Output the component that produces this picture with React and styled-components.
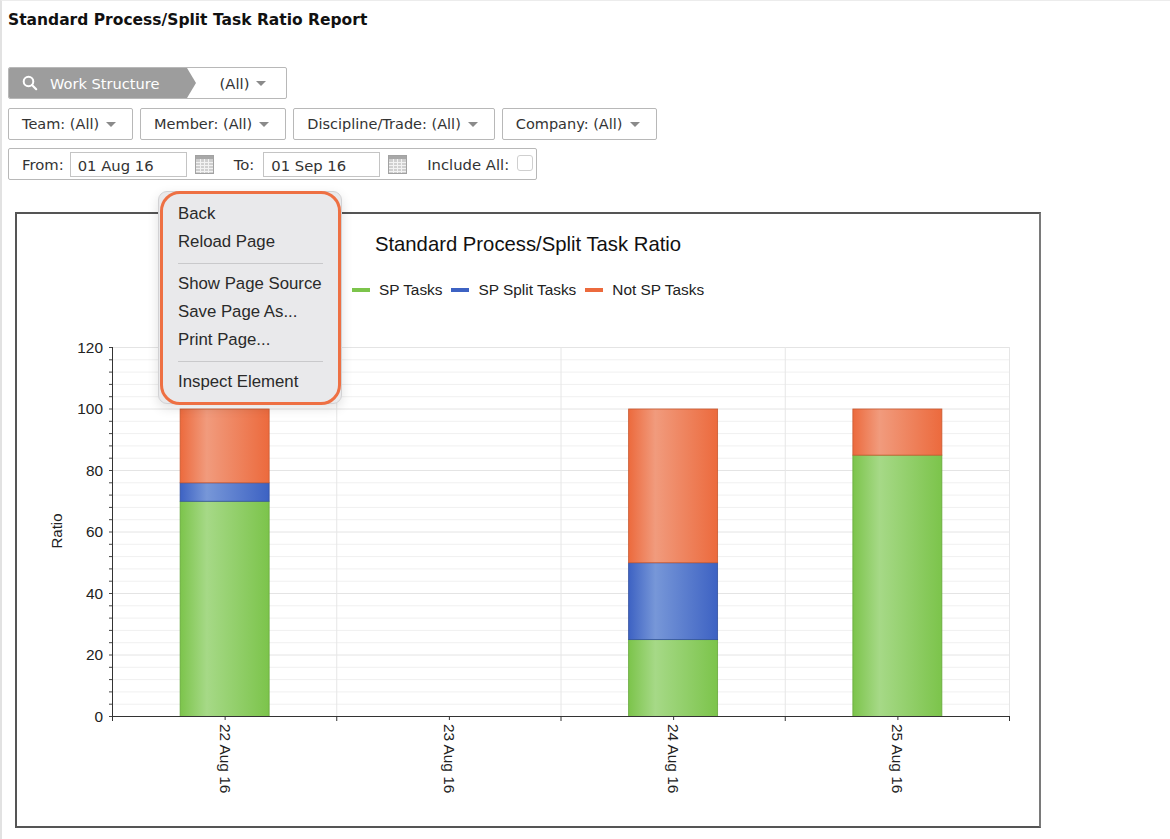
import React from "react";
import styled, { createGlobalStyle } from "styled-components";

const GlobalStyle = createGlobalStyle`
  html, body { margin: 0; padding: 0; background: #fff; }
  body { font-family: "DejaVu Sans", Verdana, sans-serif; color: #333; }
`;

const Page = styled.div`
  min-height: 839px;
  border-left: 2px solid #e2e2e2;
  border-top: 1px solid #ececec;
  padding: 0 0 0 6px;
  position: relative;
  box-sizing: border-box;
`;

const Heading = styled.h1`
  margin: 0;
  padding-top: 10px;
  font-size: 15.5px;
  line-height: 19px;
  font-weight: bold;
  color: #111;
`;

const WorkBar = styled.div`
  margin-top: 37px;
  display: flex;
  width: 279px;
  height: 32px;
  box-sizing: border-box;
  border: 1px solid #b8b8b8;
  border-radius: 2px;
  overflow: hidden;
`;

const WorkLabel = styled.div`
  width: 187px;
  display: flex;
  align-items: center;
  gap: 12px;
  padding-left: 13px;
  box-sizing: border-box;
  background: #9d9d9d;
  color: #fff;
  font-size: 14.6px;
  white-space: nowrap;
  clip-path: polygon(0 0, calc(100% - 9px) 0, 100% 50%, calc(100% - 9px) 100%, 0 100%);
`;

const WorkValue = styled.div`
  flex: 1;
  display: flex;
  align-items: center;
  justify-content: center;
  gap: 7px;
  padding-left: 4px;
  font-size: 14.8px;
`;

const Row = styled.div`
  display: flex;
  gap: 7px;
  margin-top: ${({ $top }) => $top}px;
`;

const Select = styled.div`
  height: 32px;
  box-sizing: border-box;
  border: 1px solid #b8b8b8;
  border-radius: 2px;
  display: flex;
  align-items: center;
  gap: 7px;
  padding: 0 16px 0 13px;
  font-size: 14.5px;
  white-space: nowrap;
`;

const Caret = styled.span`
  width: 0;
  height: 0;
  border-left: 5px solid transparent;
  border-right: 5px solid transparent;
  border-top: 5px solid #8a8a8a;
  margin-top: 1px;
`;

const DateBar = styled.div`
  margin-top: 8px;
  width: 529px;
  height: 32px;
  box-sizing: border-box;
  border: 1px solid #b8b8b8;
  border-radius: 2px;
  display: flex;
  align-items: center;
  padding-left: 13px;
  font-size: 14.8px;
  white-space: nowrap;
`;

const FieldLabel = styled.span`
  margin-right: ${({ $gap }) => $gap}px;
`;

const DateInput = styled.div`
  width: 117px;
  height: 25px;
  flex-shrink: 0;
  box-sizing: border-box;
  border: 1px solid #c4c4c4;
  display: flex;
  align-items: center;
  padding: 3px 0 0 7px;
  margin-right: 8px;
`;

const CalIcon = styled.svg`
  width: 19px;
  height: 19px;
  flex-shrink: 0;
  margin-right: ${({ $gap }) => $gap}px;
`;

const Check = styled.span`
  width: 14px;
  height: 14px;
  border: 1px solid #cfcfcf;
  border-radius: 3px;
  margin-left: 8px;
  margin-top: -2px;
  background: #fff;
`;

const ChartBox = styled.div`
  margin: 32px 0 0 7px;
  width: 1026px;
  height: 616px;
  box-sizing: border-box;
  border: 2px solid #555;
  border-right-color: #7a7a7a;
  display: flex;
  flex-direction: column;
  align-items: center;
  font-family: "Liberation Sans", Arial, sans-serif;
  color: #111;
`;

const ChartTitle = styled.div`
  margin-top: 20px;
  height: 20px;
  line-height: 20px;
  font-size: 20.3px;
`;

const Legend = styled.div`
  margin-top: 28px;
  height: 16px;
  display: flex;
  align-items: center;
  gap: 9px;
  font-size: 15.4px;
  color: #222;
`;

const LegendItem = styled.div`
  display: flex;
  align-items: center;
  gap: 9px;
`;

const Swatch = styled.span`
  width: 18px;
  height: 4px;
  background: ${({ $color }) => $color};
`;

const Plot = styled.svg`
  display: block;
  margin-top: 32px;
  align-self: flex-start;
`;

const Menu = styled.div`
  position: absolute;
  left: 156px;
  top: 190px;
  width: 184px;
  box-sizing: border-box;
  padding: 8px 0 7px;
  background: #e9e9eb;
  border: 1px solid #d2d2d4;
  border-radius: 9px;
  box-shadow: 0 4px 12px rgba(0, 0, 0, 0.12);
  font-family: "Liberation Sans", Arial, sans-serif;
  font-size: 16.8px;
  color: #2a2a2a;
`;

const Ring = styled.div`
  position: absolute;
  inset: -1px 0 -2px 1px;
  border: 3px solid #ee7043;
  border-radius: 20px;
  pointer-events: none;
`;

const MenuItem = styled.div`
  height: 28px;
  line-height: 28px;
  padding-left: 19px;
  white-space: nowrap;
`;

const Separator = styled.div`
  height: 14px;
  display: flex;
  align-items: center;
  padding: 0 18px 0 19px;
  &::after {
    content: "";
    flex: 1;
    height: 1px;
    background: #c9c9cb;
  }
`;

const SearchIcon = () => (
  <svg width="16" height="16" viewBox="0 0 16 16">
    <circle cx="6.5" cy="6.5" r="4.8" fill="none" stroke="#fff" strokeWidth="2" />
    <line x1="10" y1="10" x2="14.2" y2="14.2" stroke="#fff" strokeWidth="2.2" strokeLinecap="round" />
  </svg>
);

const Calendar = ({ gap }) => (
  <CalIcon $gap={gap} viewBox="0 0 19 19">
    <rect x="0.5" y="0.5" width="18" height="18" fill="#cfcfcf" stroke="#a2a2a2" />
    <rect x="1" y="1" width="17" height="3" fill="#a8a8a8" />
    {[5, 9, 13].map((x) => (
      <line key={"v" + x} x1={x + 0.5} y1="4" x2={x + 0.5} y2="18" stroke="#f2f2f2" />
    ))}
    {[7, 10, 13, 16].map((y) => (
      <line key={"h" + y} x1="1" y1={y + 0.5} x2="18" y2={y + 0.5} stroke="#f2f2f2" />
    ))}
  </CalIcon>
);

const data = [
  { label: "22 Aug 16", sp: 70, split: 6, not: 24 },
  { label: "23 Aug 16", sp: 0, split: 0, not: 0 },
  { label: "24 Aug 16", sp: 25, split: 25, not: 50 },
  { label: "25 Aug 16", sp: 85, split: 0, not: 15 },
];

const series = [
  { key: "sp", name: "SP Tasks", base: "#7cc44b", light: "#a6d987", stroke: "#66a83a" },
  { key: "split", name: "SP Split Tasks", base: "#3d62c3", light: "#7797d8", stroke: "#32509f" },
  { key: "not", name: "Not SP Tasks", base: "#ec6a3d", light: "#f19b7d", stroke: "#c8582f" },
];

const W = 1022;
const H = 496;
const X0 = 95;
const X1 = 992;
const Y0 = 386;
const scale = 3.075;
const yv = (v) => Y0 - v * scale;
const catW = (X1 - X0) / data.length;
const axisFont = "Liberation Sans, Arial, sans-serif";

const Chart = () => {
  const ticks = [];
  for (let v = 0; v <= 120; v += 4) ticks.push(v);
  return (
    <Plot width={W} height={H}>
      <defs>
        {series.map((s) => (
          <linearGradient key={s.key} id={"g-" + s.key} x1="0" x2="1" y1="0" y2="0">
            <stop offset="0" stopColor={s.base} />
            <stop offset="0.3" stopColor={s.light} />
            <stop offset="1" stopColor={s.base} />
          </linearGradient>
        ))}
      </defs>
      {ticks.map((v) => (
        <line
          key={v}
          x1={X0}
          x2={X1}
          y1={yv(v) + 0.5}
          y2={yv(v) + 0.5}
          stroke={v % 20 === 0 ? "#e4e4e4" : "#f0f0f0"}
        />
      ))}
      {data.map((d, i) => (
        <line key={i} x1={X0 + catW * (i + 1) + 0.5} x2={X0 + catW * (i + 1) + 0.5} y1={yv(120)} y2={Y0} stroke="#e6e6e6" />
      ))}
      {data.map((d, i) => {
        const cx = X0 + catW * (i + 0.5);
        let acc = 0;
        return series.map((s) => {
          const val = d[s.key];
          if (!val) return null;
          const top = yv(acc + val);
          const bottom = yv(acc);
          acc += val;
          return (
            <rect
              key={s.key + i}
              x={cx - 44}
              y={top + 0.5}
              width={89}
              height={bottom - top}
              fill={`url(#g-${s.key})`}
              stroke={s.stroke}
              strokeWidth="0.8"
            />
          );
        });
      })}
      <line x1={X0 + 0.5} x2={X0 + 0.5} y1={yv(120)} y2={Y0 + 1} stroke="#333" />
      {ticks.map((v) => (
        <line key={"t" + v} x1={X0 - 3} x2={X0} y1={yv(v) + 0.5} y2={yv(v) + 0.5} stroke="#444" />
      ))}
      <line x1={X0} x2={X1 + 1} y1={Y0 + 0.5} y2={Y0 + 0.5} stroke="#333" strokeWidth="1.2" />
      {[0, 1, 2, 3, 4].map((i) => (
        <line key={"b" + i} x1={X0 + catW * i + 0.5} x2={X0 + catW * i + 0.5} y1={Y0} y2={Y0 + 5} stroke="#333" />
      ))}
      {data.map((d, i) => (
        <line key={"c" + i} x1={X0 + catW * (i + 0.5) + 1} x2={X0 + catW * (i + 0.5) + 1} y1={Y0} y2={Y0 + 4} stroke="#333" />
      ))}
      {[0, 20, 40, 60, 80, 100, 120].map((v) => (
        <text key={"l" + v} x={86} y={yv(v) + 5.5} textAnchor="end" fontSize="15.4" fill="#222" fontFamily={axisFont}>
          {v}
        </text>
      ))}
      <text transform="translate(45 201) rotate(-90)" textAnchor="middle" fontSize="15" fill="#222" fontFamily={axisFont}>
        Ratio
      </text>
      {data.map((d, i) => (
        <text
          key={"x" + i}
          transform={`translate(${X0 + catW * (i + 0.5) - 4.5} 394) rotate(90)`}
          fontSize="15.4"
          fill="#222"
          fontFamily={axisFont}
        >
          {d.label}
        </text>
      ))}
    </Plot>
  );
};

export default function App() {
  return (
    <>
      <GlobalStyle />
      <Page>
        <Heading>Standard Process/Split Task Ratio Report</Heading>
        <WorkBar>
          <WorkLabel>
            <SearchIcon />
            Work Structure
          </WorkLabel>
          <WorkValue>
            (All) <Caret />
          </WorkValue>
        </WorkBar>
        <Row $top={9}>
          <Select>Team: (All) <Caret /></Select>
          <Select>Member: (All) <Caret /></Select>
          <Select>Discipline/Trade: (All) <Caret /></Select>
          <Select>Company: (All) <Caret /></Select>
        </Row>
        <DateBar>
          <FieldLabel $gap={6}>From:</FieldLabel>
          <DateInput>01 Aug 16</DateInput>
          <Calendar gap={20} />
          <FieldLabel $gap={9}>To:</FieldLabel>
          <DateInput>01 Sep 16</DateInput>
          <Calendar gap={20} />
          <span>Include All:</span>
          <Check />
        </DateBar>
        <ChartBox>
          <ChartTitle>Standard Process/Split Task Ratio</ChartTitle>
          <Legend>
            {series.map((s) => (
              <LegendItem key={s.key}>
                <Swatch $color={s.base} />
                {s.name}
              </LegendItem>
            ))}
          </Legend>
          <Chart />
        </ChartBox>
        <Menu>
          <MenuItem>Back</MenuItem>
          <MenuItem>Reload Page</MenuItem>
          <Separator />
          <MenuItem>Show Page Source</MenuItem>
          <MenuItem>Save Page As...</MenuItem>
          <MenuItem>Print Page...</MenuItem>
          <Separator />
          <MenuItem>Inspect Element</MenuItem>
          <Ring />
        </Menu>
      </Page>
    </>
  );
}
